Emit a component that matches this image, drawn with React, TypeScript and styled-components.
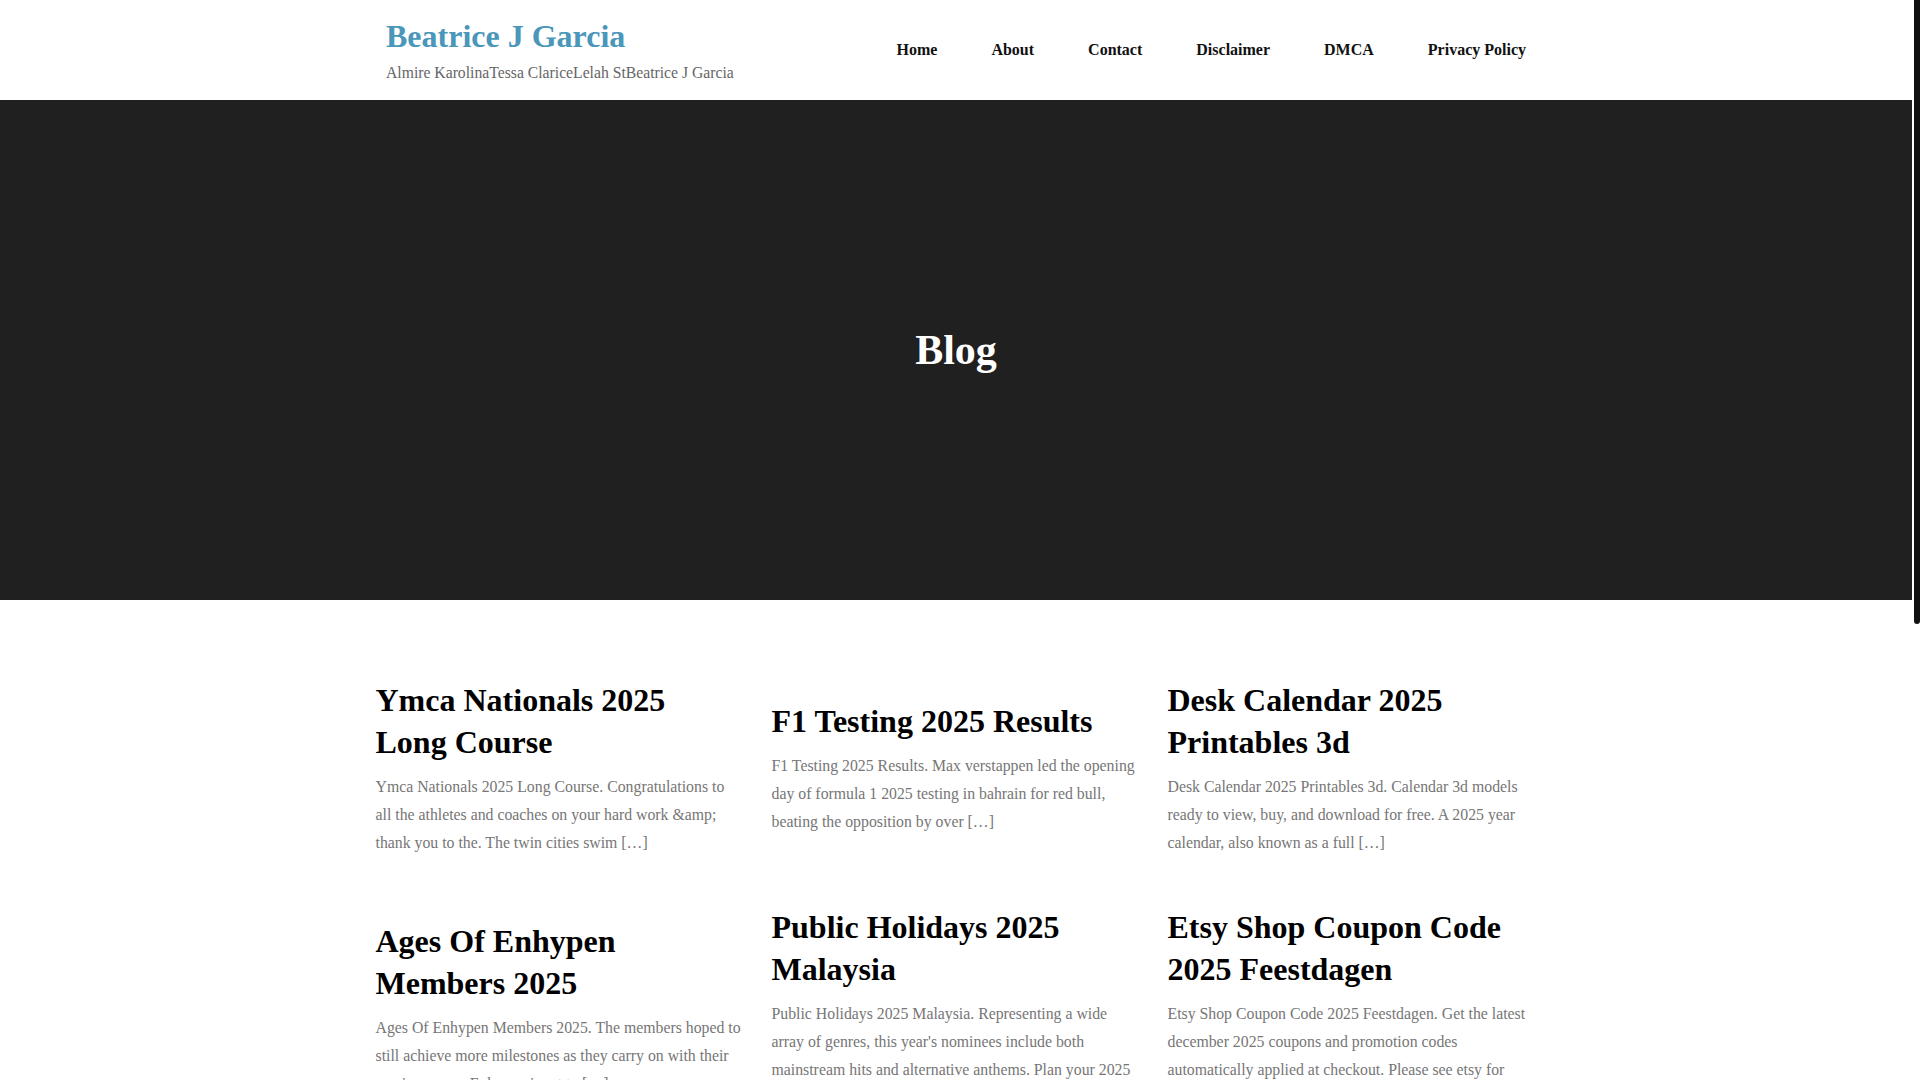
import React from 'react';
import styled, { createGlobalStyle } from 'styled-components';

const GlobalStyle = createGlobalStyle`
  html, body {
    margin: 0;
    padding: 0;
    background: #fff;
    font-family: "Liberation Serif", "Times New Roman", serif;
  }
`;

const Page = styled.div`
  margin-right: 8px;
`;

const ScrollThumb = styled.div`
  position: fixed;
  top: 0;
  right: 0;
  width: 6px;
  height: 624px;
  background: #111;
  border-radius: 0 0 3px 3px;
`;

const Header = styled.header`
  height: 100px;
  background: #fff;
`;

const HeaderInner = styled.div`
  width: 1140px;
  height: 100%;
  margin: 0 auto;
  display: flex;
  align-items: center;
  justify-content: space-between;
`;

const Brand = styled.div`
  display: flex;
  flex-direction: column;
  padding-top: 2px;
`;

const SiteTitle = styled.a`
  font-size: 32px;
  line-height: 42px;
  font-weight: 700;
  color: #4a97ba;
  text-decoration: none;
`;

const Tagline = styled.p`
  margin: 2px 0 0;
  font-size: 15.7px;
  line-height: 28px;
  color: #666;
`;

const Nav = styled.nav`
  display: flex;
  align-items: center;
  gap: 54px;
`;

const NavLink = styled.a`
  font-size: 16px;
  font-weight: 700;
  color: #111;
  text-decoration: none;
`;

const Hero = styled.section`
  height: 500px;
  background: #202020;
  display: flex;
  align-items: center;
  justify-content: center;
`;

const HeroTitle = styled.h1`
  margin: 0;
  font-size: 42px;
  line-height: 1.2;
  font-weight: 700;
  color: #fff;
`;

const Posts = styled.main`
  padding: 80px 0;
`;

const PostGrid = styled.div`
  width: 1161px;
  margin: 0 auto;
  display: grid;
  grid-template-columns: repeat(3, 366px);
  column-gap: 30px;
  row-gap: 50px;
  align-items: center;
`;

const Card = styled.article`
  display: flex;
  flex-direction: column;
`;

const PostTitle = styled.h2`
  margin: 0 0 10px;
  font-size: 32px;
  line-height: 1.3;
  font-weight: 700;
  color: #000;
`;

const Excerpt = styled.p`
  margin: 0;
  font-size: 15.8px;
  line-height: 28px;
  color: #767676;
`;

const Footer = styled.footer`
  height: 170px;
  background: #202020;
  display: flex;
  align-items: center;
  justify-content: center;
`;

const Copyright = styled.p`
  margin: 0;
  font-size: 16px;
  color: #bbb;
`;

const navItems = ['Home', 'About', 'Contact', 'Disclaimer', 'DMCA', 'Privacy Policy'];

const posts = [
  {
    title: 'Ymca Nationals 2025 Long Course',
    excerpt: 'Ymca Nationals 2025 Long Course. Congratulations to all the athletes and coaches on your hard work &amp; thank you to the. The twin cities swim […]',
  },
  {
    title: 'F1 Testing 2025 Results',
    excerpt: 'F1 Testing 2025 Results. Max verstappen led the opening day of formula 1 2025 testing in bahrain for red bull, beating the opposition by over […]',
  },
  {
    title: 'Desk Calendar 2025 Printables 3d',
    excerpt: 'Desk Calendar 2025 Printables 3d. Calendar 3d models ready to view, buy, and download for free. A 2025 year calendar, also known as a full […]',
  },
  {
    title: 'Ages Of Enhypen Members 2025',
    excerpt: 'Ages Of Enhypen Members 2025. The members hoped to still achieve more milestones as they carry on with their music careers. Enhypen is set to […]',
  },
  {
    title: 'Public Holidays 2025 Malaysia',
    excerpt: "Public Holidays 2025 Malaysia. Representing a wide array of genres, this year's nominees include both mainstream hits and alternative anthems. Plan your 2025 holidays and long weekends with […]",
  },
  {
    title: 'Etsy Shop Coupon Code 2025 Feestdagen',
    excerpt: 'Etsy Shop Coupon Code 2025 Feestdagen. Get the latest december 2025 coupons and promotion codes automatically applied at checkout. Please see etsy for more details on the […]',
  },
  {
    title: 'Nfl Draft Order 2025 Round 1',
    excerpt: 'Nfl Draft Order 2025 Round 1. The first round of the draft will be held in green bay, with every pick of the opening night listed […]',
  },
  {
    title: 'Toyota Hilux 2025 Price List',
    excerpt: 'Toyota Hilux 2025 Price List. Check out the latest prices, variants and specifications of the new pickup truck before you visit a dealer near […]',
  },
  {
    title: 'Chinese New Year 2025 Animal',
    excerpt: 'Chinese New Year 2025 Animal. The year of the snake begins on january 29, bringing wisdom and change according to the lunar zodiac […]',
  },
  {
    title: 'Easter Sunday 2025 Date Uk',
    excerpt: 'Easter Sunday 2025 Date Uk. Easter falls on april 20 this year, with good friday and easter monday both bank holidays across the […]',
  },
  {
    title: 'Best Laptops 2025 For Students',
    excerpt: 'Best Laptops 2025 For Students. We tested dozens of models to find the best machines for studying, gaming and everyday work on a budget […]',
  },
  {
    title: 'Kentucky Derby 2025 Odds',
    excerpt: 'Kentucky Derby 2025 Odds. See the latest betting lines for every horse in the field ahead of the run for the roses at churchill downs […]',
  },
];

const App: React.FC = () => {
  return (
    <Page>
      <GlobalStyle />
      <ScrollThumb />
      <Header>
        <HeaderInner>
          <Brand>
            <SiteTitle href="#">Beatrice J Garcia</SiteTitle>
            <Tagline>Almire KarolinaTessa ClariceLelah StBeatrice J Garcia</Tagline>
          </Brand>
          <Nav>
            {navItems.map(item => (
              <NavLink key={item} href="#">{item}</NavLink>
            ))}
          </Nav>
        </HeaderInner>
      </Header>

      <Hero>
        <HeroTitle>Blog</HeroTitle>
      </Hero>

      <Posts>
        <PostGrid>
          {posts.map(post => (
            <Card key={post.title}>
              <PostTitle>{post.title}</PostTitle>
              <Excerpt>{post.excerpt}</Excerpt>
            </Card>
          ))}
        </PostGrid>
      </Posts>

      <Footer>
        <Copyright>© 2025 Beatrice J Garcia. All rights reserved.</Copyright>
      </Footer>
    </Page>
  );
};

export default App;
